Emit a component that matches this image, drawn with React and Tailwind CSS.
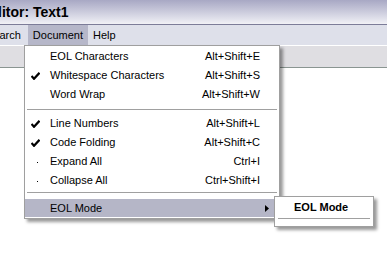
const items1 = [
  { label: 'EOL Characters', keys: 'Alt+Shift+E' },
  { label: 'Whitespace Characters', keys: 'Alt+Shift+S', mark: 'check' },
  { label: 'Word Wrap', keys: 'Alt+Shift+W' },
]

const items2 = [
  { label: 'Line Numbers', keys: 'Alt+Shift+L', mark: 'check' },
  { label: 'Code Folding', keys: 'Alt+Shift+C', mark: 'check' },
  { label: 'Expand All', keys: 'Ctrl+I', mark: 'dot' },
  { label: 'Collapse All', keys: 'Ctrl+Shift+I', mark: 'dot' },
]

function Mark({ type }) {
  if (type === 'check') {
    return (
      <svg width="9" height="8" viewBox="0 0 9 8" className="ml-[6px]">
        <path d="M0.5 4 L3 6.8 L8.5 0.8" fill="none" stroke="#000" strokeWidth="2.2" />
      </svg>
    )
  }
  if (type === 'dot') {
    return <span className="ml-[12px] mt-[2px] block h-[1px] w-[1px] bg-black"></span>
  }
  return null
}

function MenuRow({ item }) {
  return (
    <div className="flex h-[19px] items-center">
      <div className="flex w-[25px] items-center">
        <Mark type={item.mark} />
      </div>
      <span className="flex-1">{item.label}</span>
      <span className="pr-[19px]">{item.keys}</span>
    </div>
  )
}

export default function App() {
  return (
    <div className="relative h-[269px] w-[387px] overflow-hidden bg-white text-[11px] text-black [font-family:'Liberation_Sans',Arial,sans-serif]">
      <div className="flex h-[25px] items-center border-b border-[#7c7c98] bg-gradient-to-b from-[#a8a8c4] to-[#f1f1f6]">
        <span className="ml-[-16px] text-[14px] font-bold">Editor: Text1</span>
      </div>

      <div className="flex h-[20px] items-stretch bg-[#dee0ea]">
        <div className="ml-[-19px] flex items-center px-[5px]">Search</div>
        <div className="ml-[2px] flex items-center bg-[#b6b7c9] px-[5px]">Document</div>
        <div className="flex items-center px-[5px]">Help</div>
      </div>

      <div className="h-[23px] border-t border-white border-b border-b-[#8a9591] bg-[#dfdee2]"></div>

      <div className="absolute left-[24px] top-[45px] w-[256px] border border-[#9f9f9f] bg-white pt-[1px] pb-[1px] shadow-[3px_3px_3px_rgba(0,0,0,0.4)]">
        {items1.map((item) => (
          <MenuRow key={item.label} item={item} />
        ))}
        <div className="mx-[2px] flex h-[10px] items-center">
          <div className="h-[1px] w-full bg-[#a0a0a0]"></div>
        </div>
        {items2.map((item) => (
          <MenuRow key={item.label} item={item} />
        ))}
        <div className="mx-[2px] h-[9px] pt-[2px]">
          <div className="h-[1px] w-full bg-[#a0a0a0]"></div>
        </div>
        <div className="flex h-[18px] items-center bg-[#b5b6c7]">
          <span className="w-[25px]"></span>
          <span className="flex-1">EOL Mode</span>
          <svg width="4" height="7" viewBox="0 0 4 7" className="mr-[10px]">
            <path d="M0 0 L4 3.5 L0 7 Z" fill="#000" />
          </svg>
        </div>
      </div>

      <div className="absolute left-[274px] top-[196px] w-[100px] border border-[#9f9f9f] bg-white px-[3px] pb-[7px] shadow-[3px_3px_3px_rgba(0,0,0,0.4)]">
        <div className="flex h-[21px] items-center pl-[16px] font-bold">EOL Mode</div>
        <div className="h-[1px] bg-[#a0a0a0]"></div>
      </div>
    </div>
  )
}
